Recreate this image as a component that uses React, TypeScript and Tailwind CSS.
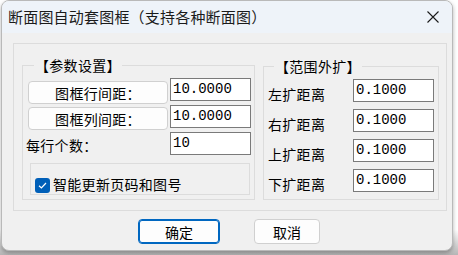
import React from "react";

const CJK = "'Noto Sans CJK SC','Noto Sans',sans-serif";
const MONO = "'Liberation Mono','DejaVu Sans Mono',monospace";

function Field({ value, className = "" }: { value: string; className?: string }) {
  return (
    <div
      className={`h-[23px] w-[81px] border border-[#7a7a7a] bg-white pl-[2px] text-[14px] leading-[20px] text-black ${className}`}
      style={{ fontFamily: MONO }}
    >
      {value}
    </div>
  );
}

function GroupTitle({ text, className = "" }: { text: string; className?: string }) {
  return (
    <div
      className={`absolute top-[-10px] bg-[#f0f0f0] px-[1px] text-[14px] leading-[18px] tracking-[0.3px] text-black ${className}`}
    >
      {text}
    </div>
  );
}

export default function App() {
  return (
    <div
      className="h-[255px] w-[458px] overflow-hidden bg-[linear-gradient(to_bottom,#ffffff_0%,#ffffff_90%,#b5b5b5_100%)]"
      style={{ fontFamily: CJK }}
    >
      <div className="ml-[1px] flex h-[251px] w-[452px] flex-col overflow-hidden rounded-[8px] border border-[#b9b9b9] bg-[#f0f0f0] shadow-[0_2px_4px_rgba(0,0,0,0.3)]">
        {/* title bar */}
        <div className="flex h-[32px] shrink-0 items-center justify-between bg-[#eef3f9] pl-[6px] pr-[13px]">
          <div className="text-[15px] leading-[20px] tracking-[0.2px] text-[#1b1b1b]">断面图自动套图框（支持各种断面图）</div>
          <svg width="12" height="12" viewBox="0 0 12 12">
            <path d="M0.5 0.5 L11.5 11.5 M11.5 0.5 L0.5 11.5" stroke="#1b1b1b" strokeWidth="1.1" />
          </svg>
        </div>

        {/* body */}
        <div className="flex flex-col pl-[11px] pt-[10px]">
          <div className="flex h-[168px] w-[434px] border border-[#dcdcdc] pl-[8px] pt-[21px]">
            {/* left group */}
            <div className="relative flex h-[135px] w-[233px] flex-col border border-[#dcdcdc] pt-[12px]">
              <GroupTitle text="【参数设置】" className="left-[11px]" />
              <div className="flex h-[27px] items-start">
                <button className="ml-[5px] mt-[3px] h-[23px] w-[140px] rounded-[4px] border border-[#d0d0d0] bg-[#fdfdfd] text-[14px] leading-[20px] tracking-[0.3px] text-black">
                  图框行间距：
                </button>
                <Field value="10.0000" className="ml-[2px]" />
              </div>
              <div className="flex h-[27px] items-start">
                <button className="ml-[5px] mt-[2px] h-[23px] w-[140px] rounded-[4px] border border-[#d0d0d0] bg-[#fdfdfd] text-[14px] leading-[20px] tracking-[0.3px] text-black">
                  图框列间距：
                </button>
                <Field value="10.0000" className="ml-[2px]" />
              </div>
              <div className="flex h-[27px] items-start">
                <div className="ml-[3px] mt-[4px] w-[144px] text-[14px] leading-[18px] tracking-[0.3px] text-black">每行个数：</div>
                <Field value="10" />
              </div>
              <div className="ml-[7px] mt-[4px] flex h-[32px] w-[220px] items-end border border-[#dcdcdc] pb-[1px] pl-[4px]">
                <div className="flex h-[15px] w-[15px] items-center justify-center rounded-[3px] bg-[#005fb8]">
                  <svg width="11" height="11" viewBox="0 0 11 11">
                    <path d="M2 5.8 L4.4 8 L9 3" fill="none" stroke="white" strokeWidth="1.2" />
                  </svg>
                </div>
                <div className="ml-[3px] text-[14px] leading-[18px] tracking-[0.3px] text-black">智能更新页码和图号</div>
              </div>
            </div>

            {/* right group */}
            <div className="relative ml-[8px] mt-[1px] flex h-[134px] w-[176px] flex-col border border-[#dcdcdc] pt-[12px]">
              <GroupTitle text="【范围外扩】" className="left-[10px]" />
              {["左扩距离", "右扩距离", "上扩距离", "下扩距离"].map((l) => (
                <div key={l} className="flex h-[32px] items-start">
                  <div className="ml-[4px] mt-[6px] w-[85px] text-[14px] leading-[18px] tracking-[0.3px] text-black">{l}</div>
                  <Field value="0.1000" className="h-[22px]" />
                </div>
              ))}
            </div>
          </div>

          {/* buttons */}
          <div className="mt-[8px] flex">
            <button className="ml-[125px] h-[25px] w-[82px] rounded-[4px] border border-[#0067c0] bg-[#fdfdfd] text-[14px] leading-[20px] text-black shadow-[inset_0_0_0_1px_#0067c0]">
              确定
            </button>
            <button className="ml-[34px] h-[25px] w-[66px] rounded-[4px] border border-[#d0d0d0] bg-[#fdfdfd] text-[14px] leading-[20px] text-black">
              取消
            </button>
          </div>
        </div>
      </div>
    </div>
  );
}
